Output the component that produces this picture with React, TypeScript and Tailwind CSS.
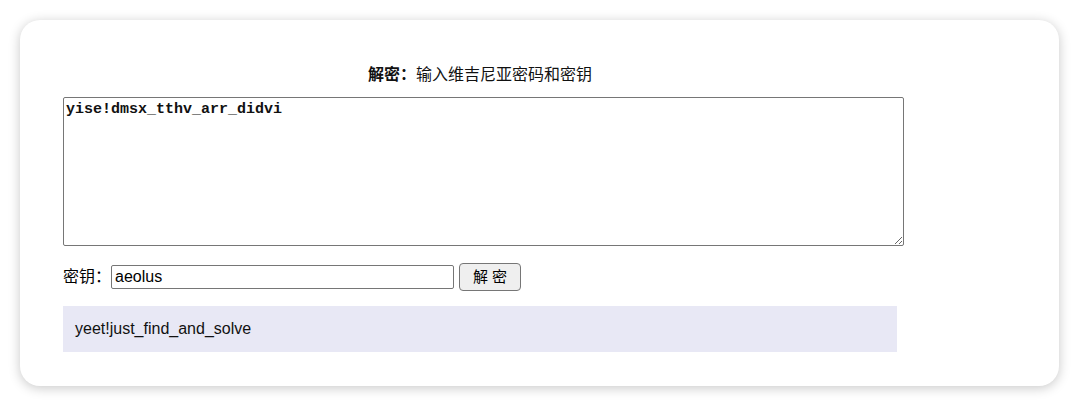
export default function App() {
  return (
    <div className="w-[1080px] h-[407px] bg-white p-[20px] box-border" style={{ fontFamily: '"Liberation Sans", "Noto Sans CJK SC", sans-serif' }}>
      <div className="w-[1039px] h-[366px] bg-white rounded-[20px] shadow-[0_2px_12px_rgba(0,0,0,0.22)] pl-[43px] pt-[45px] box-border">
        <div className="w-[834px] text-center text-[16px] leading-[20px] text-[#111] h-[32px]">
          <span className="font-bold">解密：</span>输入维吉尼亚密码和密钥
        </div>
        <textarea
          className="block w-[841px] h-[149px] border border-[#767676] rounded-[2px] px-[2px] pt-[3px] text-[15px] leading-[18px] text-[#111] font-bold outline-none resize-y"
          style={{ fontFamily: '"Liberation Mono", monospace' }}
          defaultValue="yise!dmsx_tthv_arr_didvi"
        />
        <div className="flex items-center mt-[17px] h-[28px]">
          <span className="text-[16px] w-[48px] text-black">密钥：</span>
          <input
            className="w-[343px] h-[24px] border border-[#767676] rounded-[2px] px-[3px] text-[16px] text-black outline-none"
            defaultValue="aeolus"
          />
          <button className="ml-[5px] w-[62px] h-[28px] border border-[#767676] rounded-[4px] bg-[#efefef] text-[15px] text-black">解 密</button>
        </div>
        <div className="mt-[15px] w-[834px] h-[46px] bg-[#e8e8f5] flex items-center pl-[12px] text-[16px] text-[#111]">
          yeet!just_find_and_solve
        </div>
      </div>
    </div>
  );
}
